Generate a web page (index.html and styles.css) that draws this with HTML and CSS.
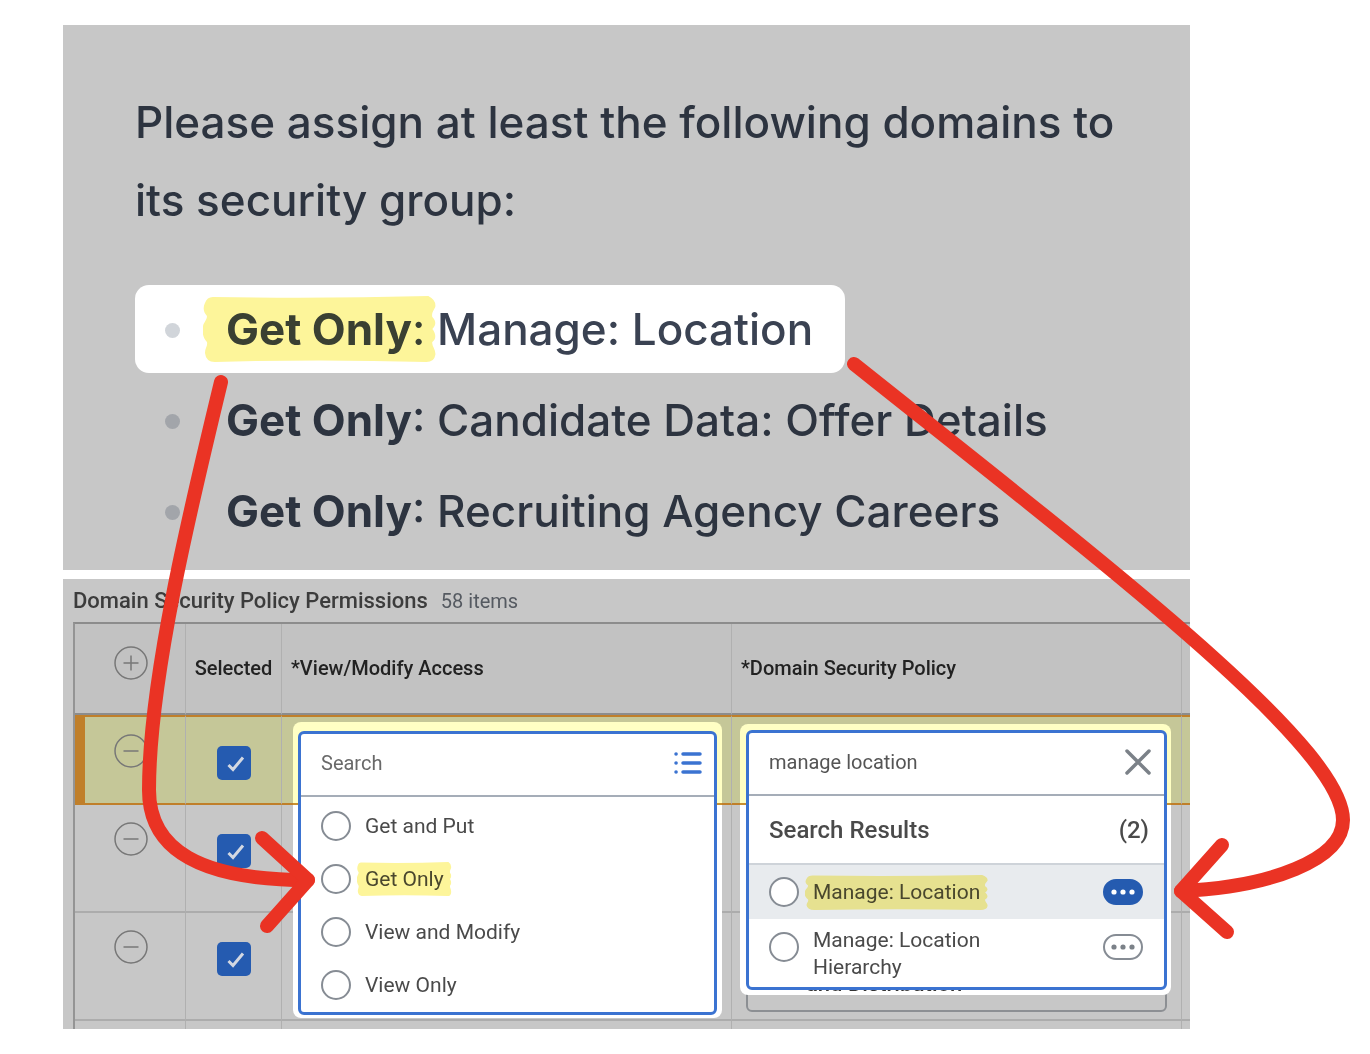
FILE: index.html
```html
<!DOCTYPE html>
<html lang="en">
<head>
    <meta charset="UTF-8">
    <meta name="viewport" content="width=device-width, initial-scale=1.0">
    <title>Domain Security Policy Permissions</title>
    <link rel="stylesheet" href="styles.css">
</head>
<body>
    <!-- shared icons -->
    <svg class="sprite" width="0" height="0" aria-hidden="true">
        <symbol id="minus" viewBox="0 0 34 34">
            <circle cx="17" cy="17" r="16"/>
            <path d="M9.500 17h15"/>
        </symbol>
        <symbol id="plus" viewBox="0 0 34 34">
            <circle cx="17" cy="17" r="16"/>
            <path d="M9.500 17h15M17 9.500v15"/>
        </symbol>
        <symbol id="tick" viewBox="0 0 34 34">
            <path d="M11.500 19l4.500 4.500L26 11.500"/>
        </symbol>
        <symbol id="marker" viewBox="0 0 236 66" preserveAspectRatio="none">
            <path d="M10 1Q118 3 228 0Q236 4 235 11C233 15 231 17 232 21C236 25 236 29 232 33C236 38 236 43 232 46C231 50 236 54 235 59Q234 66 226 66Q118 63 12 66Q3 66 2 57C2 52 5 50 4 46C-1 41 -1 33 0 30C1 26 4 24 4 20C0 16 0 11 2 7Q4 1 10 1Z"/>
        </symbol>
    </svg>

    <div class="page">
        <div class="note">
            <p>Please assign at least the following domains to its security group:</p>
            <ul>
                <li class="active"><span class="mark"><strong>Get Only</strong>:<svg><use href="#marker"/></svg></span> Manage: Location</li>
                <li><strong>Get Only</strong>: Candidate Data: Offer Details</li>
                <li><strong>Get Only</strong>: Recruiting Agency Careers</li>
            </ul>
        </div>

        <div class="permissions">
            <div class="title">
                <h2>Domain Security Policy Permissions</h2>
                <span>58 items</span>
            </div>
            <table>
                <colgroup>
                    <col class="col-action">
                    <col class="col-selected">
                    <col>
                    <col>
                    <col class="col-end">
                </colgroup>
                <thead>
                    <tr>
                        <th class="action"><button class="round" aria-label="Add row"><svg><use href="#plus"/></svg></button></th>
                        <th class="center">Selected</th>
                        <th>*View/Modify Access</th>
                        <th>*Domain Security Policy</th>
                        <th></th>
                    </tr>
                </thead>
                <tbody>
                    <tr class="current">
                        <td class="action"><button class="round" aria-label="Remove row"><svg><use href="#minus"/></svg></button></td>
                        <td class="selected"><label class="check"><input type="checkbox" aria-label="Selected" checked><svg><use href="#tick"/></svg></label></td>
                        <td>
                            <div class="popup access">
                                <div class="menu">
                                    <div class="search">
                                        <input type="text" placeholder="Search" aria-label="Search access">
                                        <button aria-label="Show list">
                                            <svg width="28" height="22" viewBox="0 0 28 22" fill="none" stroke="#3b73d1" stroke-width="3.500" stroke-linecap="round"><path d="M2 2h.1M2 11h.1M2 20h.1M9 2h17M9 11h17M9 20h17"/></svg>
                                        </button>
                                    </div>
                                    <div class="options">
                                        <label><input type="radio" name="access"><span>Get and Put</span></label>
                                        <label><input type="radio" name="access"><span class="mark">Get Only<svg><use href="#marker"/></svg></span></label>
                                        <label><input type="radio" name="access"><span>View and Modify</span></label>
                                        <label><input type="radio" name="access"><span>View Only</span></label>
                                    </div>
                                </div>
                            </div>
                        </td>
                        <td>
                            <div class="popup policy">
                                <div class="menu">
                                    <div class="search">
                                        <input type="text" value="manage location" aria-label="Search policy">
                                        <button aria-label="Clear">
                                            <svg width="28" height="28" viewBox="0 0 28 28" fill="none" stroke="#7b8188" stroke-width="3.500" stroke-linecap="round"><path d="M3 3l22 22M25 3L3 25"/></svg>
                                        </button>
                                    </div>
                                    <div class="results-head">
                                        <h3>Search Results</h3>
                                        <span>(2)</span>
                                    </div>
                                    <div class="result hover">
                                        <label><input type="radio" name="policy"><span class="mark">Manage: Location<svg><use href="#marker"/></svg></span></label>
                                        <button class="more" aria-label="Related actions">
                                            <svg width="26" height="6" viewBox="0 0 26 6"><circle cx="4" cy="3" r="2.600"/><circle cx="13" cy="3" r="2.600"/><circle cx="22" cy="3" r="2.600"/></svg>
                                        </button>
                                    </div>
                                    <div class="result">
                                        <label><input type="radio" name="policy"><span>Manage: Location Hierarchy</span></label>
                                        <button class="more" aria-label="Related actions">
                                            <svg width="26" height="6" viewBox="0 0 26 6"><circle cx="4" cy="3" r="2.600"/><circle cx="13" cy="3" r="2.600"/><circle cx="22" cy="3" r="2.600"/></svg>
                                        </button>
                                    </div>
                                </div>
                            </div>
                        </td>
                        <td></td>
                    </tr>
                    <tr>
                        <td class="action"><button class="round" aria-label="Remove row"><svg><use href="#minus"/></svg></button></td>
                        <td class="selected"><label class="check"><input type="checkbox" aria-label="Selected" checked><svg><use href="#tick"/></svg></label></td>
                        <td></td>
                        <td></td>
                        <td></td>
                    </tr>
                    <tr>
                        <td class="action"><button class="round" aria-label="Remove row"><svg><use href="#minus"/></svg></button></td>
                        <td class="selected"><label class="check"><input type="checkbox" aria-label="Selected" checked><svg><use href="#tick"/></svg></label></td>
                        <td></td>
                        <td class="filled"><div class="field"><span>and Distribution</span></div></td>
                        <td></td>
                    </tr>
                    <tr class="last">
                        <td></td>
                        <td></td>
                        <td></td>
                        <td></td>
                        <td></td>
                    </tr>
                </tbody>
            </table>
        </div>

        <svg class="arrows" width="1370" height="1054" viewBox="0 0 1370 1054" aria-hidden="true">
            <path d="M221 382C190 510 149 680 149 790C149 850 200 880 308 880"/>
            <path d="M262 838L308 880L267 926"/>
            <path d="M854 364C1100 560 1343 745 1343 820C1343 860 1270 887 1181 891"/>
            <path d="M1222 845L1181 891L1227 932"/>
        </svg>
    </div>
</body>
</html>
```

FILE: styles.css
```css
* {
    box-sizing: border-box;
}

body {
    margin: 0;
    background-color: #fff;
    font-family: Roboto, "Liberation Sans", sans-serif;
    font-size: 20px;
    color: #4a4a4a;
}

h2, h3, p, ul {
    margin: 0;
    padding: 0;
}

button {
    padding: 0;
    border: none;
    background: none;
    cursor: pointer;
}

svg {
    display: block;
}

.sprite {
    position: absolute;
}

.page {
    position: relative;
    display: flex;
    flex-direction: column;
    gap: 9px;
    padding: 25px 180px 25px 63px;
}

/* note */
.note {
    padding: 58px 64px 15px 72px;
    background-color: #c7c7c7;
    color: #2d3440;
    font-family: Inter, "Liberation Sans", sans-serif;
    font-size: 44px;
    font-weight: 450;
}

.note p {
    line-height: 78px;
}

.note ul {
    display: flex;
    flex-direction: column;
    align-items: flex-start;
    gap: 3px;
    margin-top: 46px;
    list-style: none;
}

.note li {
    position: relative;
    padding: 0 32px 0 91px;
    border-radius: 14px;
    line-height: 88px;
}

.note li::before {
    content: "";
    position: absolute;
    left: 30px;
    top: 38px;
    width: 15px;
    height: 15px;
    border-radius: 50%;
    background-color: #a2a5aa;
}

.note li.active {
    background-color: #fff;
    color: #3a4252;
}

.note li.active::before {
    background-color: #d1d5da;
}

.note strong {
    font-weight: 650;
}

/* highlighter */
.mark {
    position: relative;
}

.mark svg {
    position: absolute;
    left: -8px;
    top: -5px;
    width: calc(100% + 16px);
    height: calc(100% + 10px);
    fill: #fdf59a;
    mix-blend-mode: multiply;
}

.note .mark svg {
    left: -23px;
    width: calc(100% + 34px);
    top: -6px;
    height: 66px;
}

/* permissions table */
.permissions {
    padding-left: 10px;
    background-color: #c7c7c7;
}

.title {
    display: flex;
    align-items: center;
    gap: 13px;
    height: 43px;
    color: #555a61;
}

.title h2 {
    font-size: 22px;
    font-weight: 500;
    color: #3c3c3c;
}

table {
    width: 100%;
    table-layout: fixed;
    border-spacing: 0;
    border-top: 2px solid #8c8c8c;
    border-left: 2px solid #949494;
}

.col-action {
    width: 111px;
}

.col-selected {
    width: 96px;
}

.col-end {
    width: 8px;
}

th, td {
    padding: 0;
    border-right: 1px solid #b0b0b0;
    border-bottom: 2px solid #acacac;
}

th:last-child, td:last-child {
    border-right: none;
}

th {
    height: 91px;
    padding: 0 0 2px 9px;
    background-color: #c2c2c2;
    border-bottom-color: #8c8c8c;
    color: #222;
    font-weight: 500;
    text-align: left;
}

th.center {
    padding-left: 0;
    text-align: center;
}

td {
    position: relative;
    height: 108px;
    vertical-align: top;
}

.current td {
    height: 90px;
    background-color: #c5c798;
    border-top: 2px solid #c07f2a;
    border-bottom-color: #c07f2a;
}

.current td:first-child {
    box-shadow: inset 10px 0 #c07f2a;
}

.last td {
    height: 8px;
    border-bottom: none;
}

th.action {
    padding: 22px 0 0 2px;
    vertical-align: top;
}

td.action {
    padding: 17px 0 0 2px;
}

.round {
    display: block;
    width: 34px;
    height: 34px;
    margin: 0 auto;
}

.round svg {
    width: 34px;
    height: 34px;
    fill: none;
    stroke: #777;
    stroke-width: 1.500px;
}

td.selected {
    padding-top: 29px;
}

.check {
    display: grid;
    justify-content: center;
}

.check input, .check svg {
    grid-area: 1 / 1;
    width: 34px;
    height: 34px;
}

.check input {
    appearance: none;
    margin: 0;
    border-radius: 5px;
    background-color: #255bb0;
}

.check svg {
    pointer-events: none;
    fill: none;
    stroke: #d3d8e2;
    stroke-width: 3px;
}

td.filled {
    padding: 17px 14px 0;
}

.field {
    height: 82px;
    padding: 40px 58px 0;
    border: 2px solid #8c8f93;
    border-radius: 6px;
}

.field span {
    position: relative;
    z-index: 2;
    color: #333;
    font-size: 22px;
    font-weight: 500;
    line-height: 24px;
}

/* open menus, each on a light pad */
.popup {
    position: absolute;
}

.popup::before {
    content: "";
    position: absolute;
    inset: 0;
    z-index: 1;
    border-radius: 8px;
}

.access {
    top: 5px;
    left: 11px;
    right: 9px;
    padding: 9px 5px 3px;
}

.access::before {
    background: linear-gradient(#ffffc4 81px, #c98f2f 81px, #c98f2f 83px, #fff 83px);
}

.policy {
    top: 7px;
    left: 8px;
    right: 10px;
    padding: 6px 4px 5px 6px;
}

.policy::before {
    background: linear-gradient(#ffffc4 79px, #c98f2f 79px, #c98f2f 81px, #fff 81px);
}

.menu {
    position: relative;
    z-index: 3;
    border: 3px solid #3b73d1;
    border-radius: 6px;
    background-color: #fff;
    font-size: 21px;
}

.search {
    display: flex;
    align-items: center;
    height: 63px;
    padding: 0 12px 3px 20px;
    border-bottom: 2px solid #a5adb8;
    font-size: 20px;
}

.search input {
    flex: 1;
    min-width: 0;
    padding: 0;
    border: none;
    outline: none;
    background: none;
    font: inherit;
    color: #555;
}

.search input::placeholder {
    color: #696969;
    opacity: 1;
}

.options {
    padding: 2px 0 1px;
}

.options label {
    display: flex;
    align-items: center;
    gap: 14px;
    height: 53px;
    padding-left: 20px;
}

.menu input[type="radio"] {
    appearance: none;
    flex: none;
    width: 30px;
    height: 30px;
    margin: 0;
    border: 2px solid #868c94;
    border-radius: 50%;
    background-color: #fff;
}

.results-head {
    display: flex;
    align-items: center;
    justify-content: space-between;
    height: 69px;
    padding: 0 15px 0 20px;
    border-bottom: 2px solid #ced3d9;
    font-size: 24px;
    font-weight: 500;
}

.results-head h3 {
    font-size: 24px;
    font-weight: 500;
}

.result {
    display: flex;
    align-items: flex-start;
    justify-content: space-between;
    padding: 8px 21px 6px 20px;
}

.result label {
    display: flex;
    gap: 14px;
    width: 240px;
    line-height: 27px;
}

.result input[type="radio"] {
    margin-top: 5px;
}

.result .more {
    display: flex;
    align-items: center;
    justify-content: center;
    width: 40px;
    height: 26px;
    margin-top: 7px;
    border: 2px solid #868c94;
    border-radius: 13px;
    fill: #7b8188;
}

.result.hover {
    align-items: center;
    height: 54px;
    padding-top: 0;
    padding-bottom: 0;
    background-color: #e8ebee;
}

.hover label {
    align-items: center;
}

.hover input[type="radio"], .hover .more {
    margin-top: 0;
}

.hover .more {
    border-color: #255bb0;
    background-color: #255bb0;
    fill: #fff;
}

.hover .mark svg {
    top: -4px;
    height: 35px;
}

/* arrows lie over both panels */
.arrows {
    position: absolute;
    left: 0;
    top: 0;
    z-index: 5;
    fill: none;
    stroke: #ea3324;
    stroke-width: 14px;
    stroke-linecap: round;
    stroke-linejoin: round;
    pointer-events: none;
}
```
